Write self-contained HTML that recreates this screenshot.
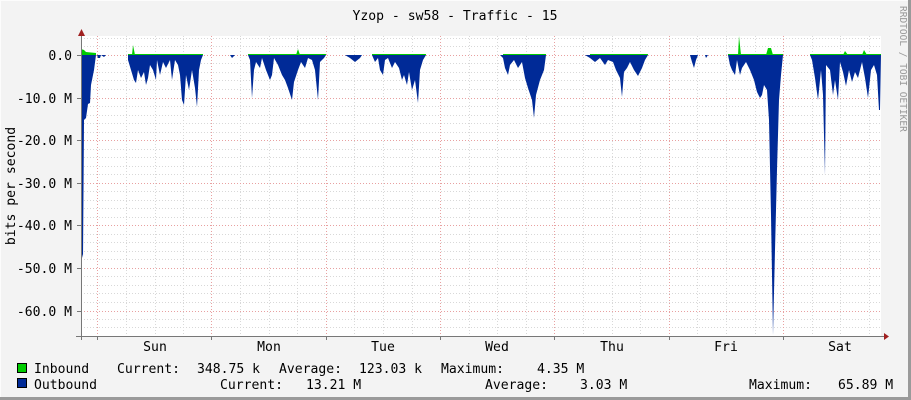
<!DOCTYPE html>
<html><head><meta charset="utf-8"><style>
html,body{margin:0;padding:0;background:#f3f3f3;}
body{width:911px;height:400px;overflow:hidden;position:relative;}
svg{position:absolute;left:0;top:0;}
text{font-family:"DejaVu Sans Mono","Liberation Mono",monospace;font-size:13.1px;fill:#000;}
</style></head><body>
<svg width="911" height="400" viewBox="0 0 911 400" xmlns="http://www.w3.org/2000/svg">
<rect x="0" y="0" width="911" height="400" fill="#f3f3f3"/>
<line x1="0" y1="0.5" x2="911" y2="0.5" stroke="#fcfcfc"/>
<line x1="0.5" y1="0" x2="0.5" y2="400" stroke="#fcfcfc"/>
<line x1="0" y1="398.5" x2="911" y2="398.5" stroke="#9a9a9a" stroke-width="3"/>
<line x1="909.5" y1="0" x2="909.5" y2="400" stroke="#9a9a9a" stroke-width="3"/>
<rect x="81" y="36" width="800" height="300" fill="#fff"/>
<g stroke="#d8d8d8" stroke-dasharray="1,2" stroke-width="1">
<line x1="81" y1="38.5" x2="881" y2="38.5"/><line x1="81" y1="46.5" x2="881" y2="46.5"/>
<line x1="81" y1="63.5" x2="881" y2="63.5"/><line x1="81" y1="72.5" x2="881" y2="72.5"/><line x1="81" y1="80.5" x2="881" y2="80.5"/><line x1="81" y1="89.5" x2="881" y2="89.5"/>
<line x1="81" y1="106.5" x2="881" y2="106.5"/><line x1="81" y1="115.5" x2="881" y2="115.5"/><line x1="81" y1="123.5" x2="881" y2="123.5"/><line x1="81" y1="132.5" x2="881" y2="132.5"/>
<line x1="81" y1="149.5" x2="881" y2="149.5"/><line x1="81" y1="157.5" x2="881" y2="157.5"/><line x1="81" y1="166.5" x2="881" y2="166.5"/><line x1="81" y1="174.5" x2="881" y2="174.5"/>
<line x1="81" y1="191.5" x2="881" y2="191.5"/><line x1="81" y1="200.5" x2="881" y2="200.5"/><line x1="81" y1="208.5" x2="881" y2="208.5"/><line x1="81" y1="217.5" x2="881" y2="217.5"/>
<line x1="81" y1="234.5" x2="881" y2="234.5"/><line x1="81" y1="242.5" x2="881" y2="242.5"/><line x1="81" y1="251.5" x2="881" y2="251.5"/><line x1="81" y1="259.5" x2="881" y2="259.5"/>
<line x1="81" y1="276.5" x2="881" y2="276.5"/><line x1="81" y1="285.5" x2="881" y2="285.5"/><line x1="81" y1="293.5" x2="881" y2="293.5"/><line x1="81" y1="302.5" x2="881" y2="302.5"/>
<line x1="81" y1="319.5" x2="881" y2="319.5"/><line x1="81" y1="327.5" x2="881" y2="327.5"/>
<line x1="126.5" y1="36" x2="126.5" y2="336"/><line x1="155.5" y1="36" x2="155.5" y2="336"/><line x1="183.5" y1="36" x2="183.5" y2="336"/>
<line x1="240.5" y1="36" x2="240.5" y2="336"/><line x1="269.5" y1="36" x2="269.5" y2="336"/><line x1="297.5" y1="36" x2="297.5" y2="336"/>
<line x1="354.5" y1="36" x2="354.5" y2="336"/><line x1="383.5" y1="36" x2="383.5" y2="336"/><line x1="412.5" y1="36" x2="412.5" y2="336"/>
<line x1="469.5" y1="36" x2="469.5" y2="336"/><line x1="497.5" y1="36" x2="497.5" y2="336"/><line x1="526.5" y1="36" x2="526.5" y2="336"/>
<line x1="583.5" y1="36" x2="583.5" y2="336"/><line x1="612.5" y1="36" x2="612.5" y2="336"/><line x1="640.5" y1="36" x2="640.5" y2="336"/>
<line x1="697.5" y1="36" x2="697.5" y2="336"/><line x1="726.5" y1="36" x2="726.5" y2="336"/><line x1="755.5" y1="36" x2="755.5" y2="336"/>
<line x1="812.5" y1="36" x2="812.5" y2="336"/><line x1="840.5" y1="36" x2="840.5" y2="336"/><line x1="869.5" y1="36" x2="869.5" y2="336"/>
</g>
<g stroke="#e8a0a0" stroke-dasharray="1,2" stroke-width="1">
<line x1="81" y1="55.5" x2="881" y2="55.5"/><line x1="81" y1="98.5" x2="881" y2="98.5"/><line x1="81" y1="140.5" x2="881" y2="140.5"/>
<line x1="81" y1="183.5" x2="881" y2="183.5"/><line x1="81" y1="225.5" x2="881" y2="225.5"/><line x1="81" y1="268.5" x2="881" y2="268.5"/><line x1="81" y1="311.5" x2="881" y2="311.5"/>
<line x1="97.5" y1="36" x2="97.5" y2="336"/><line x1="211.5" y1="36" x2="211.5" y2="336"/><line x1="326.5" y1="36" x2="326.5" y2="336"/>
<line x1="440.5" y1="36" x2="440.5" y2="336"/><line x1="554.5" y1="36" x2="554.5" y2="336"/><line x1="669.5" y1="36" x2="669.5" y2="336"/><line x1="783.5" y1="36" x2="783.5" y2="336"/>
</g>
<g fill="#00cc00">
<polygon points="81,55 81,49 84,50 86,52 96,53 96,55"/>
<rect x="128" y="54" width="75" height="1"/>
<polygon points="132,55 133,45 135,55"/>
<rect x="248" y="54" width="78" height="1"/>
<polygon points="296,55 298,49 300,55"/>
<rect x="372" y="54" width="54" height="1"/>
<rect x="503" y="54" width="43" height="1"/>
<rect x="590" y="54" width="58" height="1"/>
<rect x="728" y="54" width="55" height="1"/>
<polygon points="738,55 739,36 741,55"/>
<polygon points="766,55 768,48 771,48 773,55"/>
<rect x="810" y="54" width="71" height="1"/>
<polygon points="843,55 845,51 848,55"/><polygon points="862,55 864,50 867,55"/>
</g>
<polygon fill="#002a97" points="81,55 81,250 83,258 84,120 86,118 88,104 90,103 91,85 94,70 96,55 97,55 98,58 100,58 101,55 104,57 106,55 128,55 128,60 131,70 134,80 136,83 138,70 141,78 144,72 146,85 148,78 150,65 153,70 156,80 157,60 160,75 163,62 166,68 170,60 172,80 175,60 178,65 180,75 182,100 184,105 186,75 189,90 192,70 195,88 197,107 199,70 201,60 203,55 230,55 232,58 235,55 248,55 250,60 252,98 254,70 256,62 260,68 262,58 266,70 270,80 272,75 274,58 278,65 282,75 285,80 288,88 292,100 294,82 298,70 301,62 305,68 308,58 312,60 315,70 318,100 320,62 324,58 326,55 345,55 350,58 355,62 360,58 362,55 372,55 375,62 378,58 380,70 383,75 385,60 388,58 392,68 395,62 399,68 402,80 404,75 407,85 409,72 412,90 415,80 418,103 420,70 423,60 426,55 500,55 503,58 505,68 508,75 510,65 514,60 518,68 522,62 525,78 528,88 532,100 534,118 536,95 540,80 544,70 546,55 585,55 590,58 595,62 600,58 605,65 608,60 613,62 616,70 620,78 622,97 624,72 627,68 630,62 634,70 638,76 642,68 645,60 648,55 690,55 692,62 694,68 696,60 698,55 705,55 706,58 708,55 728,55 730,65 732,70 735,75 737,60 740,75 742,68 746,62 750,70 754,80 757,92 760,98 762,95 764,85 767,90 769,120 771,215 773,335 775,250 777,170 779,100 781,75 783,55 810,55 812,60 815,78 818,100 821,70 823,95 825,175 826,65 830,70 833,95 835,80 838,100 840,62 843,72 846,86 849,70 852,82 855,72 858,78 862,62 865,78 868,98 871,70 874,65 877,75 879,110 880,110 881,55"/>
<line x1="76" y1="336.5" x2="884" y2="336.5" stroke="#777"/>
<line x1="81.5" y1="340" x2="81.5" y2="32" stroke="#777"/>
<polygon points="884,333 889,336.5 884,340" fill="#a02020"/>
<polygon points="78,36 81.5,29 85,36" fill="#a02020"/>
<g stroke="#777"><line x1="77" y1="55.5" x2="81" y2="55.5"/><line x1="77" y1="98.5" x2="81" y2="98.5"/><line x1="77" y1="140.5" x2="81" y2="140.5"/><line x1="77" y1="183.5" x2="81" y2="183.5"/><line x1="77" y1="225.5" x2="81" y2="225.5"/><line x1="77" y1="268.5" x2="81" y2="268.5"/><line x1="77" y1="311.5" x2="81" y2="311.5"/>
<line x1="97.5" y1="336" x2="97.5" y2="340"/><line x1="211.5" y1="336" x2="211.5" y2="340"/><line x1="326.5" y1="336" x2="326.5" y2="340"/><line x1="440.5" y1="336" x2="440.5" y2="340"/><line x1="554.5" y1="336" x2="554.5" y2="340"/><line x1="669.5" y1="336" x2="669.5" y2="340"/><line x1="783.5" y1="336" x2="783.5" y2="340"/></g>
<text x="455" y="20" text-anchor="middle">Yzop - sw58 - Traffic - 15</text>
<g text-anchor="end">
<text x="72" y="60">0.0</text><text x="72" y="103">-10.0 M</text><text x="72" y="145">-20.0 M</text><text x="72" y="188">-30.0 M</text><text x="72" y="230">-40.0 M</text><text x="72" y="273">-50.0 M</text><text x="72" y="316">-60.0 M</text>
</g>
<text transform="translate(15,186) rotate(-90)" text-anchor="middle">bits per second</text>
<text transform="translate(900,6) rotate(90)" style="font-size:9.5px;fill:#999">RRDTOOL / TOBI OETIKER</text>
<g text-anchor="middle">
<text x="155" y="351">Sun</text><text x="269" y="351">Mon</text><text x="383" y="351">Tue</text><text x="497" y="351">Wed</text><text x="612" y="351">Thu</text><text x="726" y="351">Fri</text><text x="840" y="351">Sat</text>
</g>
<rect x="17.5" y="363.5" width="9" height="9" fill="#00cc00" stroke="#000"/>
<rect x="17.5" y="378.5" width="9" height="9" fill="#002a97" stroke="#000"/>
<text x="34" y="373">Inbound</text>
<text x="117" y="373">Current:</text>
<text x="197" y="373">348.75 k</text>
<text x="279" y="373">Average:</text>
<text x="359" y="373">123.03 k</text>
<text x="441" y="373">Maximum:</text>
<text x="537" y="373">4.35 M</text>
<text x="34" y="389">Outbound</text>
<text x="220" y="389">Current:</text>
<text x="306" y="389">13.21 M</text>
<text x="485" y="389">Average:</text>
<text x="580" y="389">3.03 M</text>
<text x="749" y="389">Maximum:</text>
<text x="838" y="389">65.89 M</text>
</svg>
</body></html>
